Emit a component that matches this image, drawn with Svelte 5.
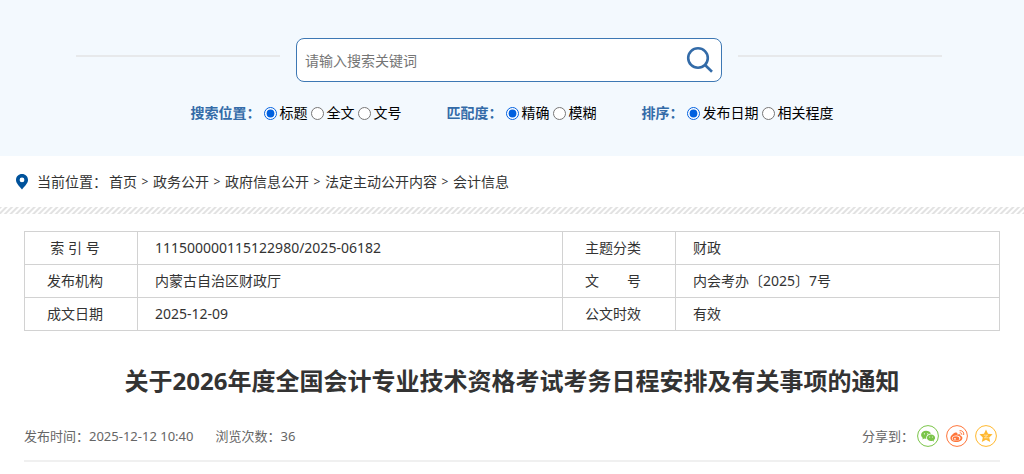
<script lang="ts">
	let keyword = $state('');

	const filters = $state([
		{ name: 'position', label: '搜索位置：', options: ['标题', '全文', '文号'], selected: '标题' },
		{ name: 'match', label: '匹配度：', options: ['精确', '模糊'], selected: '精确' },
		{ name: 'sort', label: '排序：', options: ['发布日期', '相关程度'], selected: '发布日期' }
	]);

	const crumbs = ['首页', '政务公开', '政府信息公开', '法定主动公开内容', '会计信息'];

	const rows = [
		['索 引 号', '111500000115122980/2025-06182', '主题分类', '财政'],
		['发布机构', '内蒙古自治区财政厅', '文\u3000\u3000号', '内会考办〔2025〕7号'],
		['成文日期', '2025-12-09', '公文时效', '有效']
	];
</script>

<header>
	<form class="search" onsubmit={(e) => e.preventDefault()}>
		<span class="rule"></span>
		<div class="box">
			<input type="text" aria-label="搜索" placeholder="请输入搜索关键词" bind:value={keyword} />
			<button type="submit" aria-label="搜索">
				<svg viewBox="0 0 28 28" width="28" height="28">
					<circle cx="12" cy="12" r="9.8" />
					<path d="M18.8 18.8 L26 25.8" />
				</svg>
			</button>
		</div>
		<span class="rule"></span>
	</form>

	<div class="filters">
		{#each filters as filter}
			<div class="filter" role="radiogroup" aria-label={filter.label}>
				<strong>{filter.label}</strong>
				{#each filter.options as option}
					<label>
						<input type="radio" name={filter.name} value={option} bind:group={filter.selected} />
						{option}
					</label>
				{/each}
			</div>
		{/each}
	</div>
</header>

<nav>
	<svg viewBox="0 0 12 16" width="12" height="16">
		<path
			fill-rule="evenodd"
			d="M6 0 C2.6 0 0 2.6 0 5.9 C0 9.4 3.4 11.8 6 15.6 C8.6 11.8 12 9.4 12 5.9 C12 2.6 9.4 0 6 0 Z M6 3.5 A2.4 2.4 0 1 1 6 8.3 A2.4 2.4 0 1 1 6 3.5 Z"
		/>
	</svg>
	<span class="here">当前位置：</span>
	{#each crumbs as crumb, i}
		{#if i > 0}<span class="sep">&gt;</span>{/if}
		<a href="#{i}">{crumb}</a>
	{/each}
</nav>
<div class="stripes"></div>

<main>
	<table>
		<colgroup>
			<col class="key" />
			<col class="wide" />
			<col class="key" />
			<col />
		</colgroup>
		<tbody>
			{#each rows as row}
				<tr>
					<th scope="row">{row[0]}</th>
					<td>{row[1]}</td>
					<th scope="row">{row[2]}</th>
					<td>{row[3]}</td>
				</tr>
			{/each}
		</tbody>
	</table>

	<h1>关于2026年度全国会计专业技术资格考试考务日程安排及有关事项的通知</h1>

	<div class="meta">
		<span>发布时间：2025-12-12 10:40</span>
		<span>浏览次数：36</span>
		<div class="share">
			<span>分享到：</span>
			<a class="wechat" href="#wechat" aria-label="微信">
				<svg viewBox="0 0 22 22" width="22" height="22">
					<circle class="ring" cx="11" cy="11" r="10.4" />
					<path
						d="M9 5.8 C6.2 5.8 4.1 7.5 4.1 9.8 C4.1 11.1 4.8 12.2 5.8 12.9 L5.3 14.6 L7.3 13.5 C8 13.7 8.7 13.8 9.3 13.7 C8.8 10.8 11.2 8.8 13.9 8.8 C13.4 7 11.4 5.8 9 5.8 Z"
					/>
					<path
						d="M14 9.5 C11.6 9.5 9.9 11 9.9 12.8 C9.9 14.7 11.7 16.1 14 16.1 C14.6 16.1 15.1 16 15.6 15.8 L17.1 16.7 L16.7 15.2 C17.6 14.6 18.1 13.8 18.1 12.8 C18.1 11 16.3 9.5 14 9.5 Z"
					/>
					<g class="eyes">
						<circle cx="7.4" cy="8.8" r=".6" />
						<circle cx="10.7" cy="8.8" r=".6" />
						<circle cx="12.7" cy="12" r=".5" />
						<circle cx="15.4" cy="12" r=".5" />
					</g>
				</svg>
			</a>
			<a class="weibo" href="#weibo" aria-label="微博">
				<svg viewBox="0 0 22 22" width="22" height="22">
					<circle class="ring" cx="11" cy="11" r="10.4" />
					<path
						fill-rule="evenodd"
						d="M9.5 7.6 C7.5 8.1 4.4 11 4.4 13.2 C4.4 15.6 7.2 17 10.2 17 C14 17 16.4 14.9 16.4 12.9 C16.4 11.6 15.3 11 14.4 10.8 C14.8 9.5 14 8.8 11.4 9.8 C11.8 8.3 11.2 7.2 9.5 7.6 Z M10 10.6 C12.5 10.4 14.4 11.5 14.5 13.1 C14.6 14.6 12.8 15.8 10.3 15.9 C7.8 16 6 15 5.9 13.5 C5.8 12 7.6 10.7 10 10.6 Z"
					/>
					<path
						fill-rule="evenodd"
						d="M9.9 11.4 A2.6 2.2 0 1 0 10 15.6 A2.6 2.2 0 1 0 9.9 11.4 Z M9 13.1 A.9 .8 0 1 1 8.9 14.7 A.9 .8 0 1 1 9 13.1 Z"
					/>
					<path class="wave" d="M13.5 5.7 C16.2 5.2 18.3 7.3 17.7 10 M13.7 7.8 C15.1 7.6 16 8.5 15.8 9.7" />
				</svg>
			</a>
			<a class="qzone" href="#qzone" aria-label="QQ空间">
				<svg viewBox="0 0 22 22" width="22" height="22">
					<circle class="ring" cx="11" cy="11" r="10.4" />
					<path
						d="M11 4.5 L13 8.8 L17.6 9.3 L14.2 12.4 L15.2 17 L11 14.7 L6.8 17 L7.8 12.4 L4.4 9.3 L9 8.8 Z"
					/>
					<path class="fold" d="M8.8 10.2 H12.6 L9.4 12.8 H13.6" />
				</svg>
			</a>
		</div>
	</div>
</main>

<style>
	:global(body) {
		margin: 0;
		background: #fff;
		color: #333;
		font: 14px/20px 'Noto Sans', 'Noto Sans CJK SC', sans-serif;
	}

	header {
		padding: 38px 0 33px;
		background: #f3f9fe;
	}

	.search {
		display: flex;
		align-items: flex-start;
		gap: 16px;
		padding: 0 82px 0 76px;
	}
	.rule {
		flex: 1;
		height: 2px;
		margin-top: 17px;
		background: #e7e9eb;
	}
	.box {
		display: flex;
		box-sizing: border-box;
		width: 426px;
		height: 44px;
		border: 1px solid #3d78b4;
		border-radius: 8px;
		background: #fff;
	}
	.box input {
		flex: 1;
		min-width: 0;
		padding: 2px 8px 0;
		border: 0;
		outline: 0;
		background: none;
		font: inherit;
	}
	.box input::placeholder {
		color: #757575;
	}
	.box button {
		display: flex;
		align-items: center;
		padding: 0 7px;
		border: 0;
		background: none;
		cursor: pointer;
	}
	.box svg {
		fill: none;
		stroke: #336ba8;
		stroke-width: 2.6;
	}

	.filters {
		display: flex;
		justify-content: center;
		gap: 45px;
		margin-top: 21px;
		color: #000;
	}
	.filter,
	.filter label {
		display: flex;
		align-items: center;
		gap: 3px;
	}
	.filter strong {
		color: #336ba8;
	}
	.filter input {
		width: 13px;
		height: 13px;
		margin: 0;
		accent-color: #0060df;
	}

	nav {
		display: flex;
		align-items: center;
		padding: 16px 16px 15px;
	}
	nav svg {
		fill: #00529b;
	}
	.here {
		margin: 0 2px 0 9px;
	}
	.sep {
		width: 16px;
		text-align: center;
		font-size: 12px;
	}
	a {
		color: inherit;
		text-decoration: none;
	}

	.stripes {
		height: 7px;
		background: repeating-linear-gradient(135deg, #e2e2e2 0 1px, #fff 2px 3px, #e2e2e2 4px);
	}

	main {
		padding: 17px 24px 0;
	}

	table {
		width: 100%;
		table-layout: fixed;
		border-collapse: collapse;
	}
	.key {
		width: 113px;
	}
	.wide {
		width: 425px;
	}
	th,
	td {
		height: 32px;
		padding: 0 17px;
		border: 1px solid #d2d2d2;
		font-weight: normal;
		text-align: left;
	}
	th {
		padding: 0 12px 0 0;
		text-align: center;
	}

	h1 {
		margin: 31px 0 0;
		font-size: 24px;
		line-height: 38px;
		text-align: center;
	}

	.meta {
		display: flex;
		align-items: center;
		gap: 22px;
		margin-top: 25px;
		padding-bottom: 13px;
		border-bottom: 2px solid #f0f0f0;
		color: #666;
		font-size: 13px;
	}
	.share {
		display: flex;
		align-items: center;
		gap: 7px;
		margin-left: auto;
		padding-right: 3px;
	}
	.share > span {
		margin-right: -4px;
	}
	.share svg {
		display: block;
		fill: currentColor;
	}
	.share .ring,
	.share .wave {
		fill: none;
		stroke: currentColor;
		stroke-width: 1;
	}
	.eyes {
		fill: #fff;
	}
	.share .fold {
		fill: none;
		stroke: #fff;
		stroke-width: 0.5;
	}
	.wechat {
		color: #7bc549;
	}
	.weibo {
		color: #ff763b;
	}
	.qzone {
		color: #ffb82e;
	}
</style>
